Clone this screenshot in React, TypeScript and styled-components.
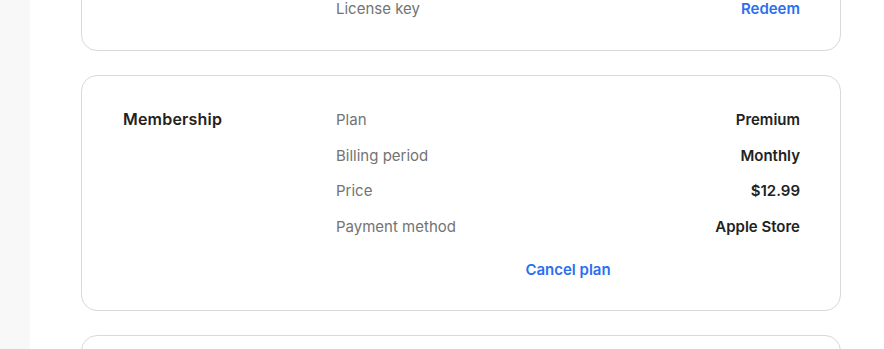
import React from "react";
import styled, { createGlobalStyle } from "styled-components";

const Global = createGlobalStyle`
  html, body { margin: 0; padding: 0; background: #ffffff; overflow: hidden; }
  body { font-family: "Inter", "Lato", "Liberation Sans", sans-serif; }
`;

const Page = styled.div`
  display: flex;
  width: 884px;
  height: 349px;
  overflow: hidden;
`;

const Sidebar = styled.div`
  width: 30px;
  flex: none;
  background: #f8f8f8;
`;

const Main = styled.div`
  flex: 1;
  padding: 0 43px 0 51px;
`;

const Stack = styled.div`
  display: flex;
  flex-direction: column;
  gap: 24px;
  margin-top: -200px;
`;

const Card = styled.section<{ $pt?: number; $pb?: number; $minH?: number }>`
  display: grid;
  grid-template-columns: 213px 1fr;
  border: 1px solid #d9d9d9;
  border-radius: 16px;
  padding: ${(p) => p.$pt ?? 26}px 40px ${(p) => p.$pb ?? 30}px 41px;
  min-height: ${(p) => p.$minH ?? 0}px;
  box-sizing: border-box;
  background: #fff;
`;

const Title = styled.h2`
  margin: 0;
  font-size: 16px;
  font-weight: 600;
  letter-spacing: 0.2px;
  color: #222;
  line-height: 35.5px;
`;

const Rows = styled.div`
  display: flex;
  flex-direction: column;
  justify-content: flex-end;
`;

const Row = styled.div`
  display: flex;
  justify-content: space-between;
  align-items: center;
  height: 35.5px;
`;

const Label = styled.span`
  font-size: 15px;
  color: #737373;
`;

const Value = styled.span`
  font-size: 15px;
  font-weight: 600;
  color: #222;
`;

const Link = styled.a`
  font-size: 15px;
  font-weight: 600;
  color: #2a6ff0;
  text-decoration: none;
  cursor: pointer;
`;

const Centered = styled.div`
  display: flex;
  justify-content: center;
  margin-top: 16px;
  line-height: 20px;
`;

const membership: [string, string][] = [
  ["Plan", "Premium"],
  ["Billing period", "Monthly"],
  ["Price", "$12.99"],
  ["Payment method", "Apple Store"],
];

export default function App() {
  return (
    <>
      <Global />
      <Page>
        <Sidebar />
        <Main>
          <Stack>
            <Card $pt={25} $pb={24} $minH={251}>
              <div />
              <Rows>
                <Row>
                  <Label>License key</Label>
                  <Link>Redeem</Link>
                </Row>
              </Rows>
            </Card>
            <Card>
              <Title>Membership</Title>
              <Rows>
                {membership.map(([l, v]) => (
                  <Row key={l}>
                    <Label>{l}</Label>
                    <Value>{v}</Value>
                  </Row>
                ))}
                <Centered>
                  <Link>Cancel plan</Link>
                </Centered>
              </Rows>
            </Card>
            <Card $minH={200} />
          </Stack>
        </Main>
      </Page>
    </>
  );
}
